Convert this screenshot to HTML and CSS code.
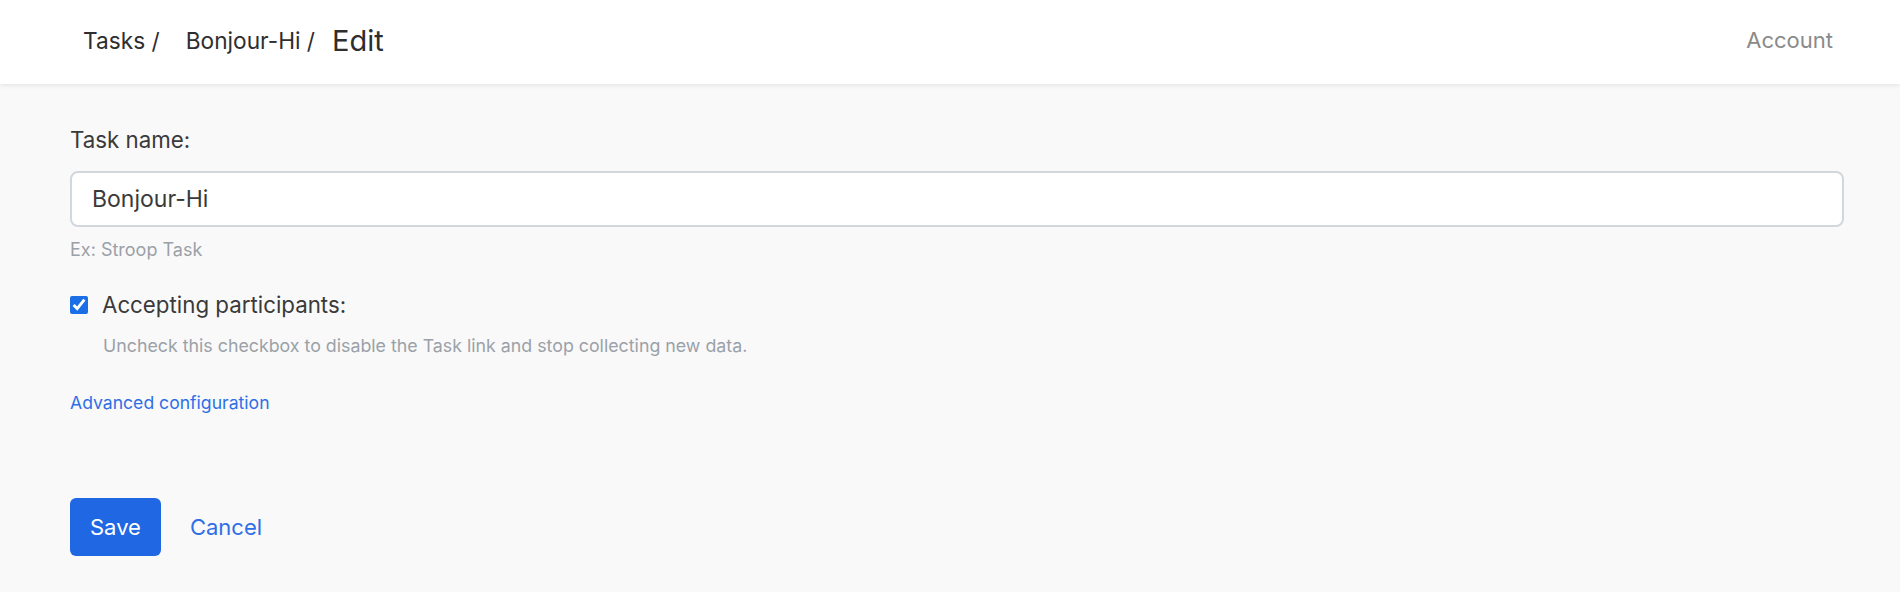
FILE: index.html
```html
<!DOCTYPE html>
<html lang="en">
<head>
<meta charset="utf-8">
<title>Edit Task</title>
<link rel="stylesheet" href="styles.css">
</head>
<body>
<header class="topbar">
  <nav class="crumbs">
    <a class="crumb" href="#">Tasks /</a>
    <a class="crumb" href="#">Bonjour-Hi /</a>
    <span class="crumb-current">Edit</span>
  </nav>
  <a class="account" href="#">Account</a>
</header>
<main class="content">
  <form class="task-form">
    <label class="field-label" for="task-name">Task name:</label>
    <input class="text-input" id="task-name" type="text" value="Bonjour-Hi">
    <p class="hint">Ex: Stroop Task</p>
    <div class="check-row">
      <input class="checkbox" id="accepting" type="checkbox" checked>
      <label class="check-label" for="accepting">Accepting participants:</label>
    </div>
    <p class="check-help">Uncheck this checkbox to disable the Task link and stop collecting new data.</p>
    <a class="advanced" href="#">Advanced configuration</a>
    <div class="actions">
      <button class="btn-save" type="button">Save</button>
      <a class="cancel" href="#">Cancel</a>
    </div>
  </form>
</main>
</body>
</html>
```

FILE: styles.css
```css
* { box-sizing: border-box; }
html, body { margin: 0; padding: 0; }
body {
  background: #f9f9f9;
  font-family: Inter, "Noto Sans", sans-serif;
  color: #333;
  height: 592px;
  overflow: hidden;
}
a { text-decoration: none; }

.topbar {
  height: 84px;
  background: #fff;
  box-shadow: 0 1px 5px rgba(0,0,0,0.10);
  display: flex;
  align-items: center;
  justify-content: space-between;
  padding: 0 67px 4px 83px;
  position: relative;
}
.crumbs {
  display: flex;
  align-items: center;
  gap: 25px;
}
.crumb {
  font-size: 22.7px;
  color: #2e2e2e;
}
.crumb:nth-child(2) { margin-left: 1px; }
.crumb-current {
  font-size: 29px;
  color: #2e2e2e;
  margin-left: -8px;
}
.account {
  font-size: 22px;
  color: #8a8a8a;
}

.content {
  padding: 43px 56px 0 70px;
}
.task-form {
  display: flex;
  flex-direction: column;
  align-items: flex-start;
}
.field-label {
  font-size: 22.3px;
  line-height: 26px;
  color: #3a3a3a;
}
.text-input {
  margin-top: 18px;
  width: 100%;
  height: 56px;
  border: 2px solid #d2d7dd;
  border-radius: 8px;
  background: #fff;
  padding: 0 20px;
  font-family: inherit;
  font-size: 23px;
  color: #3a3a3a;
  outline: none;
}
.hint {
  margin: 13px 0 0;
  font-size: 18px;
  line-height: 20px;
  color: #9ba1a8;
}
.check-row {
  margin-top: 32px;
  display: flex;
  align-items: center;
  height: 26px;
}
.checkbox {
  width: 18px;
  height: 18px;
  margin: 0 14px 0 0;
  accent-color: #1a6fe6;
}
.check-label {
  font-size: 22.3px;
  line-height: 26px;
  color: #3a3a3a;
}
.check-help {
  margin: 18px 0 0 33px;
  font-size: 17.8px;
  line-height: 20px;
  color: #9ba1a8;
}
.advanced {
  margin-top: 36px;
  font-size: 17.6px;
  line-height: 22px;
  color: #2f6fe6;
}
.actions {
  margin-top: 84px;
  display: flex;
  align-items: center;
  gap: 29px;
}
.btn-save {
  height: 58px;
  padding: 0 20px;
  border: none;
  border-radius: 6px;
  background: #2067e3;
  color: #fff;
  font-family: inherit;
  font-size: 22px;
}
.cancel {
  font-size: 22px;
  color: #2f6fe6;
}
```
